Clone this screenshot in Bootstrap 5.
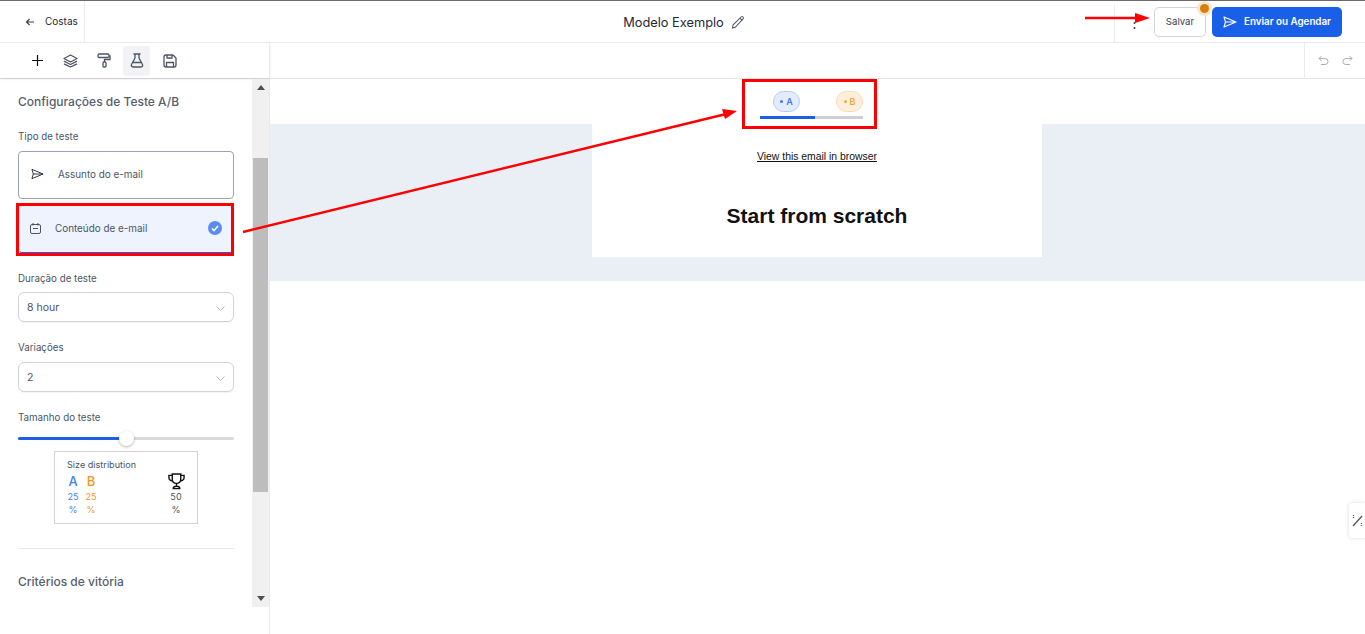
<!doctype html>
<html lang="pt">
<head>
<meta charset="utf-8">
<title>Modelo Exemplo</title>
<link href="https://cdn.jsdelivr.net/npm/bootstrap@5.3.0/dist/css/bootstrap.min.css" rel="stylesheet">
<style>
html,body{height:634px;overflow:hidden}
body{font-family:Inter,"Liberation Sans",sans-serif;color:#1f2937;background:#fff;position:relative}
.topline{height:1px;background:#6b6b6b}
.headbar{height:42px;border-bottom:1px solid #e9e9ec}
.backcell{width:85px;height:41px;border-right:1px solid #e9ebf0;padding-left:25px;font-size:10px;gap:10px;color:#1f2937}
.titletext{font-size:12.8px;color:#1f2937}
.titlewrap{left:0;right:0;gap:7px;padding-left:3px;pointer-events:none}
.overlaycenter{position:absolute;top:1px;height:41px}
.rightgroup{margin-right:23px;height:41px}
.kebabcell{width:40px;height:38px;border-left:1px solid #e9ebf0;padding-left:18px;margin-top:3px}
.savebtn{width:52px;height:30px;border:1px solid #cfd4dd;border-radius:5px;background:#fff;font-size:9.6px;color:#374151;padding:1px 0 0;margin-right:6px;position:relative}
.savedot{position:absolute;top:-4px;right:-4px;width:9px;height:9px;border-radius:50%;background:#dc7d07;box-shadow:0 0 0 3px #f9e6cf}
.sendbtn{width:130px;height:30px;background:#1a5fe8;border:0;border-radius:5px;color:#fff;font-size:9.8px;font-weight:600;gap:7px;padding:1px 0 0}
.toolbar{height:36px;border-bottom:1px solid #e6e6e8}
.tools{width:270px;border-right:1px solid #e9ebf0;padding-left:24px;gap:6px;box-shadow:0 1px 2px rgba(0,0,0,.12)}
.toolcell{width:27px;height:30px;border-radius:3px}
.toolcell.on{background:#f2f3f6}
.undo{width:61px;height:35px;border-left:1px solid #e9ebf0;gap:13px;padding-bottom:1px}
.mainarea{height:555px}
.sidecol{width:270px;border-right:1px solid #e9ebf0}
.sidescroll{height:528px;overflow:hidden}
.sidebody{width:252px;flex:0 0 252px;padding-left:18px;padding-right:18px;color:#4b5563}
.paneltitle{font-size:12px;font-weight:500;color:#565e6c;margin:15px 0 0;line-height:16px}
.fieldlabel{font-size:9.75px;line-height:14px;color:#4b5563;margin:19px 0 0}
.fieldlabel.firstlabel{margin-top:20px}
.optcard{height:48px;border:1px solid #9aa3b2;border-radius:4px;font-size:9.9px;color:#4b5563;padding:0 0 2px 12px;gap:14px;margin-top:7px}
.optcard.picked{background:#eef3fe;border:1px solid #d7e1f7;border-bottom:1px solid #2b5be8;margin:6px 0 1px;padding:0 11px 2px 11px;gap:14px}
.checkdot{width:14px;height:14px;border-radius:50%;background:#5b8def;margin-left:auto}
.fakeselect{height:30px;border:1px solid #cfd3dc;border-radius:6px;font-size:10.500px;color:#4b5563;padding:2px 8px 0;box-shadow:0 1px 1px rgba(0,0,0,.05);margin-top:7px}
.fakeselect.nearlabel{margin-top:6px}
.slidetrack{height:3px;background:#d9dae0;border-radius:2px;position:relative;margin-top:12px}
.slidefill{height:3px;background:#1a5fe8;border-radius:2px}
.slidethumb{position:absolute;left:101px;top:-6px;width:15px;height:15px;border-radius:50%;background:#fff;box-shadow:0 1px 3px rgba(0,0,0,.3)}
.distbox{width:144px;height:73px;margin:11px 0 0 36px;border:1px solid #cfd3dc;padding:6px 12px;font-size:9.100px;color:#4b5563}
.distgrid{margin-top:1px;margin-left:-3px}
.distcol{width:18px;text-align:center;line-height:13px}
.bigletter{font-size:13px;font-weight:500;line-height:16px;height:17px;display:block}
.tone-a{color:#3f7ff5}
.tone-b{color:#f7941d}
.winner{width:18px;margin-left:67px;text-align:center;line-height:13px}
.splitline{border-top:1px solid #e9e9ec;margin:24px 0 0}
.crit{font-size:12px;font-weight:500;margin:25px 0 0;line-height:16px;color:#565e6c}
.fakebar{width:17px;flex:0 0 17px;height:528px;background:#f0f0f0}
.fakeup,.fakedown{height:17px}
.fakethumb{width:15px;height:334px;background:#bdbdbd;margin:62px auto 0}
.canvasarea{min-width:0}
.abrow{height:45px;padding-top:12px;padding-left:490px}
.abwrap{width:103px}
.abpill{height:21px;width:27px;border-radius:11px;font-size:9px;font-weight:600;gap:3px}
.abpill.pa{background:#e3ecfd;border:1px solid #b4cbf6;color:#3d7bf0;margin-left:13px}
.abpill.pb{background:#fdefd9;border:1px solid #f8dcb0;color:#f5a53a;margin-left:36px}
.abdot{width:3px;height:3px;border-radius:50%;background:currentColor}
.abtrack{height:3px;background:#cfcfcf;margin-top:4px}
.abfill{height:3px;width:55px;background:#1a5fe8}
.emailband{height:157px;background:#eaeff6}
.emailsheet{width:450px;height:133px;background:#fff;margin-left:322px;font-family:"Liberation Sans",Arial,sans-serif;color:#111;text-align:center}
.viewlink{display:block;padding-top:26px;font-size:10.400px;line-height:13px;color:#111;text-decoration:underline}
.sheettitle{font-size:21px;font-weight:700;line-height:24px;margin:41px 0 0;color:#111}
.sidetab{position:absolute;right:0;top:503px;width:16px;height:35px;background:#fff;border-radius:4px 0 0 4px;box-shadow:0 0 4px rgba(0,0,0,.15)}
.redmarks{position:absolute;left:0;top:0;width:1365px;height:634px;pointer-events:none}
</style>
</head>
<body>
<div class="topline"></div>
<header class="headbar d-flex justify-content-between position-relative">
  <div class="backcell d-flex align-items-center">
    <svg width="10" height="10" viewBox="0 0 10 10" fill="none" stroke="#374151" stroke-width="1.2"><path d="M9 5H1.5M4.5 2 1.5 5l3 3"/></svg>
    <span>Costas</span>
  </div>
  <div class="overlaycenter titlewrap d-flex justify-content-center align-items-center">
    <span class="titletext">Modelo Exemplo</span>
    <svg width="14" height="15" viewBox="0 0 15 15" fill="none" stroke="#4b5563" stroke-width="1.1"><path d="M1.5 13.5 2.3 10 10.8 1.6c.6-.6 1.5-.6 2.1 0s.6 1.5 0 2.1L4.5 12.6zM9.6 2.8l2.6 2.6"/></svg>
  </div>
  <div class="rightgroup d-flex align-items-center">
    <div class="kebabcell d-flex align-items-center">
      <svg width="3" height="14" viewBox="0 0 3 14" fill="#374151"><circle cx="1.5" cy="2" r="1"/><circle cx="1.5" cy="7" r="1"/><circle cx="1.5" cy="12" r="1"/></svg>
    </div>
    <button class="btn savebtn" type="button">Salvar<span class="savedot"></span></button>
    <button class="btn sendbtn d-flex align-items-center justify-content-center" type="button">
      <svg width="14" height="12" viewBox="0 0 14 12" fill="none" stroke="#fff" stroke-width="1.100" stroke-linejoin="round"><path d="M1 1 13 6 1 11l1.5-5zM2.500 6H13"/></svg>
      Enviar ou Agendar
    </button>
  </div>
</header>
<div class="toolbar d-flex">
  <div class="tools d-flex align-items-center">
    <div class="toolcell d-flex align-items-center justify-content-center"><svg width="11" height="11" viewBox="0 0 11 11" stroke="#111" stroke-width="1.2"><path d="M5.500 0v11M0 5.500h11"/></svg></div>
    <div class="toolcell d-flex align-items-center justify-content-center"><svg width="15" height="14" viewBox="0 0 15 14" fill="none" stroke="#4b5563" stroke-width="1.300" stroke-linejoin="round"><path d="M7.500 1 14 4.500 7.500 8 1 4.500zM1 7.200 7.500 10.500 14 7.200M1 9.800 7.500 13 14 9.800"/></svg></div>
    <div class="toolcell d-flex align-items-center justify-content-center"><svg width="14" height="15" viewBox="0 0 14 15" fill="none" stroke="#4b5563" stroke-width="1.300"><rect x="1" y="1" width="11" height="3.500" rx="1.200"/><path d="M12 3h1v3.500H7.500V9"/><rect x="6" y="9" width="3" height="5" rx="1"/></svg></div>
    <div class="toolcell on d-flex align-items-center justify-content-center"><svg width="14" height="15" viewBox="0 0 14 15" fill="none" stroke="#4b5563" stroke-width="1.300" stroke-linejoin="round"><path d="M3.500 1h7M5 1v4L1.500 11.500c-.6 1.200.2 2.500 1.500 2.500h8c1.300 0 2.100-1.300 1.500-2.500L9 5V1M3 9.500h8"/></svg></div>
    <div class="toolcell d-flex align-items-center justify-content-center"><svg width="14" height="14" viewBox="0 0 14 14" fill="none" stroke="#4b5563" stroke-width="1.300" stroke-linejoin="round"><path d="M1 3c0-1.100.9-2 2-2h7l3 3v7c0 1.100-.9 2-2 2H3c-1.100 0-2-.9-2-2z"/><path d="M4 1v3h5V1M3.500 13V8.500h7V13"/></svg></div>
  </div>
  <div class="flex-grow-1"></div>
  <div class="undo d-flex align-items-center justify-content-center">
    <svg width="11" height="11" viewBox="0 0 11 11" fill="none" stroke="#a8adb6" stroke-width="1"><path d="M3.500 1 1 3.500 3.500 6M1 3.500h6a3 3 0 0 1 0 6H3"/></svg>
    <svg width="11" height="11" viewBox="0 0 11 11" fill="none" stroke="#a8adb6" stroke-width="1"><path d="M7.500 1 10 3.500 7.500 6M10 3.500H4a3 3 0 0 0 0 6h4"/></svg>
  </div>
</div>
<div class="mainarea d-flex">
  <aside class="sidecol">
    <div class="sidescroll d-flex">
      <div class="sidebody">
        <h2 class="paneltitle">Configurações de Teste A/B</h2>
        <p class="fieldlabel firstlabel">Tipo de teste</p>
        <div class="optcard d-flex align-items-center">
          <svg width="13" height="12" viewBox="0 0 14 12" fill="none" stroke="#1f2937" stroke-width="1" stroke-linejoin="round"><path d="M1 1 13 6 1 11l1.500-5zM2.500 6H13"/></svg>
          <span>Assunto do e-mail</span>
        </div>
        <div class="optcard picked d-flex align-items-center">
          <svg width="11" height="11" viewBox="0 0 11 11" fill="none" stroke="#4b5563" stroke-width="1"><rect x=".5" y="1.500" width="10" height="9" rx="1.500"/><path d="M3 0v2.500M8 0v2.500M3 5.500h5"/></svg>
          <span>Conteúdo de e-mail</span>
          <span class="checkdot d-flex align-items-center justify-content-center"><svg width="8" height="7" viewBox="0 0 8 7" fill="none" stroke="#fff" stroke-width="1.600"><path d="M1 3.500 3 5.500 7 1"/></svg></span>
        </div>
        <p class="fieldlabel">Duração de teste</p>
        <div class="fakeselect nearlabel d-flex align-items-center justify-content-between">
          <span>8 hour</span>
          <svg width="9" height="5" viewBox="0 0 9 5" fill="none" stroke="#b5bac4"><path d="M.5.500 4.500 4.500 8.500.500"/></svg>
        </div>
        <p class="fieldlabel">Variações</p>
        <div class="fakeselect d-flex align-items-center justify-content-between">
          <span>2</span>
          <svg width="9" height="5" viewBox="0 0 9 5" fill="none" stroke="#b5bac4"><path d="M.5.500 4.500 4.500 8.500.500"/></svg>
        </div>
        <p class="fieldlabel">Tamanho do teste</p>
        <div class="slidetrack"><div class="slidefill" style="width:47%"></div><span class="slidethumb"></span></div>
        <div class="distbox">
          <div>Size distribution</div>
          <div class="distgrid d-flex">
            <div class="distcol tone-a"><span class="bigletter">A</span>25<br>%</div>
            <div class="distcol tone-b"><span class="bigletter">B</span>25<br>%</div>
            <div class="winner">
              <svg class="d-block mx-auto" width="19" height="17" viewBox="0 0 19 18" fill="none" stroke="#111" stroke-width="1.500"><path d="M5 1h9v6c0 2.500-2 4-4.500 4S5 9.500 5 7zM5 2.500H1.500V5c0 1.500 1.500 3 4 3.500M14 2.500h3.500V5c0 1.500-1.500 3-4 3.500M9.500 11v3M6 16.500c0-1.500 1-2.500 3.500-2.500s3.500 1 3.500 2.500z"/></svg>
              <span class="d-block mt-0">50<br>%</span>
            </div>
          </div>
        </div>
        <div class="splitline"></div>
        <h3 class="crit">Critérios de vitória</h3>
      </div>
      <div class="fakebar d-flex flex-column">
        <div class="fakeup d-flex align-items-center justify-content-center"><svg width="8" height="5" viewBox="0 0 8 5" fill="#505050"><path d="M4 0 8 5H0z"/></svg></div>
        <div class="fakethumb flex-shrink-0"></div>
        <div class="flex-grow-1"></div>
        <div class="fakedown d-flex align-items-center justify-content-center"><svg width="8" height="5" viewBox="0 0 8 5" fill="#505050"><path d="M0 0h8L4 5z"/></svg></div>
      </div>
    </div>
  </aside>
  <main class="canvasarea flex-grow-1">
    <div class="abrow">
      <div class="abwrap">
        <div class="d-flex">
          <span class="abpill pa d-flex align-items-center justify-content-center"><i class="abdot"></i>A</span>
          <span class="abpill pb d-flex align-items-center justify-content-center"><i class="abdot"></i>B</span>
        </div>
        <div class="abtrack"><div class="abfill"></div></div>
      </div>
    </div>
    <div class="emailband">
      <div class="emailsheet">
        <a class="viewlink" href="#">View this email in browser</a>
        <h1 class="sheettitle">Start from scratch</h1>
      </div>
    </div>
  </main>
</div>
<div class="sidetab d-flex align-items-center justify-content-center">
  <svg width="11" height="14" viewBox="0 0 11 14" fill="none" stroke="#555" stroke-width="1.300"><path d="M1 12 10 2"/><path d="M1.500 1v4M9.500 9v4" stroke-dasharray="1 1"/></svg>
</div>
<svg class="redmarks" viewBox="0 0 1365 634" fill="none">
  <rect x="17.500" y="204.500" width="215" height="50" stroke="#f00" stroke-width="3"/>
  <rect x="743.500" y="80.500" width="132" height="47" stroke="#f00" stroke-width="3"/>
  <path d="M243 232 724 114.500" stroke="#f00" stroke-width="2.500"/>
  <path d="M737 111 722 109 725 119z" fill="#f00"/>
  <path d="M1085 18H1137" stroke="#f00" stroke-width="2.500"/>
  <path d="M1150 18 1135 13V23z" fill="#f00"/>
</svg>
<script src="https://cdn.jsdelivr.net/npm/bootstrap@5.3.0/dist/js/bootstrap.bundle.min.js"></script>
</body>
</html>
